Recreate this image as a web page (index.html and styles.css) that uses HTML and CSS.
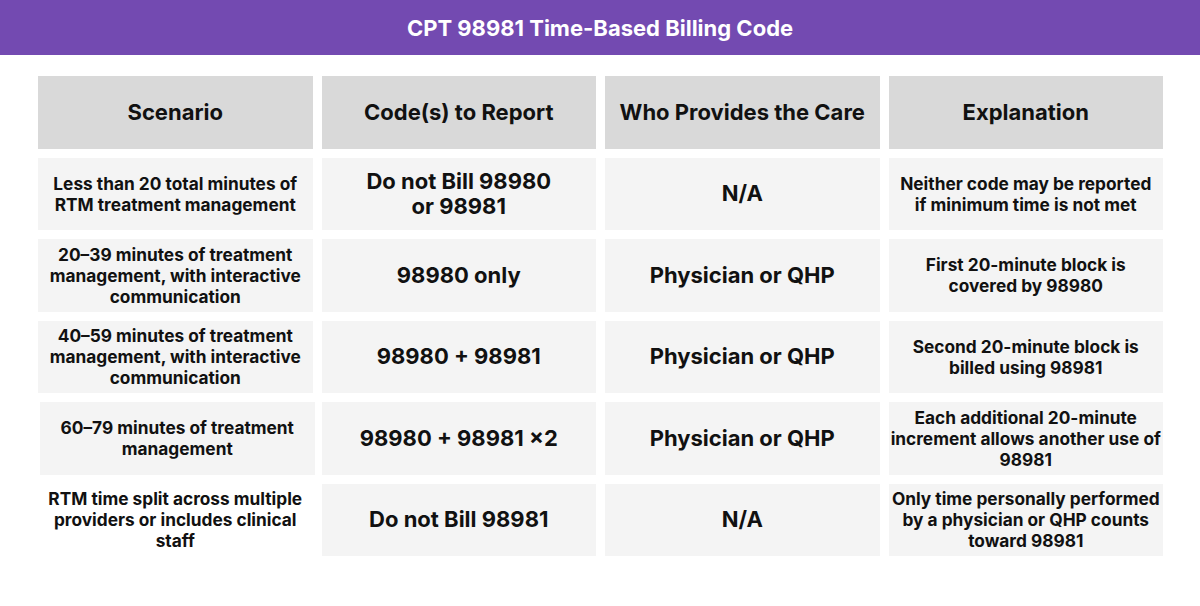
FILE: index.html
```html
<!DOCTYPE html>
<html lang="en">
<head>
<meta charset="utf-8">
<title>CPT 98981 Time-Based Billing Code</title>
<link rel="stylesheet" href="styles.css">
</head>
<body>
<header class="banner">CPT 98981 Time-Based Billing Code</header>
<main class="table">
  <div class="cell head">Scenario</div>
  <div class="cell head">Code(s) to Report</div>
  <div class="cell head">Who Provides the Care</div>
  <div class="cell head">Explanation</div>

  <div class="cell small">Less than 20 total minutes of<br>RTM treatment management</div>
  <div class="cell big">Do not Bill 98980<br>or 98981</div>
  <div class="cell big">N/A</div>
  <div class="cell small">Neither code may be reported<br>if minimum time is not met</div>

  <div class="cell small">20–39 minutes of treatment<br>management, with interactive<br>communication</div>
  <div class="cell big">98980 only</div>
  <div class="cell big">Physician or QHP</div>
  <div class="cell small">First 20-minute block is<br>covered by 98980</div>

  <div class="cell small">40–59 minutes of treatment<br>management, with interactive<br>communication</div>
  <div class="cell big">98980 + 98981</div>
  <div class="cell big">Physician or QHP</div>
  <div class="cell small">Second 20-minute block is<br>billed using 98981</div>

  <div class="cell small shifted">60–79 minutes of treatment<br>management</div>
  <div class="cell big">98980 + 98981 ×2</div>
  <div class="cell big">Physician or QHP</div>
  <div class="cell small">Each additional 20-minute<br>increment allows another use of<br>98981</div>

  <div class="cell small blank">RTM time split across multiple<br>providers or includes clinical<br>staff</div>
  <div class="cell big">Do not Bill 98981</div>
  <div class="cell big">N/A</div>
  <div class="cell small">Only time personally performed<br>by a physician or QHP counts<br>toward 98981</div>
</main>
</body>
</html>
```

FILE: styles.css
```css
html, body {
  margin: 0;
  padding: 0;
  background: #ffffff;
}

body {
  font-family: Inter, "Noto Sans", "Liberation Sans", sans-serif;
  color: #111111;
  width: 1200px;
  height: 606px;
  overflow: hidden;
}

.banner {
  height: 55px;
  background: #734ab1;
  color: #ffffff;
  font-size: 22px;
  font-weight: 700;
  display: flex;
  align-items: center;
  justify-content: center;
}

.table {
  margin: 21px 37px 0 38px;
  display: grid;
  grid-template-columns: repeat(4, 1fr);
  grid-auto-rows: 72.5px;
  gap: 9px;
}

.cell {
  background: #f4f4f4;
  display: flex;
  align-items: center;
  justify-content: center;
  text-align: center;
  font-weight: 700;
}

.head {
  background: #d9d9d9;
  font-size: 22px;
}

.big {
  font-size: 22px;
  line-height: 25px;
}

.small {
  font-size: 17.3px;
  line-height: 21px;
}

.shifted {
  margin-left: 2px;
  margin-right: -2px;
}

.blank {
  background: #ffffff;
}
```
